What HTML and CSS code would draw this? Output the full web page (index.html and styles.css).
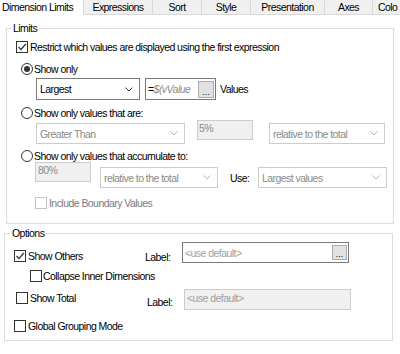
FILE: index.html
```html
<!DOCTYPE html>
<html>
<head>
<meta charset="utf-8">
<link rel="stylesheet" href="styles.css">
</head>
<body>
<div class="tabs">
  <div class="tab active">Dimension Limits</div>
  <div class="tab t-expr">Expressions</div>
  <div class="tab t-sort">Sort</div>
  <div class="tab t-style">Style</div>
  <div class="tab t-pres">Presentation</div>
  <div class="tab t-axes">Axes</div>
  <div class="tab t-colo">Colo</div>
</div>

<fieldset class="group limits">
  <legend>Limits</legend>

  <div class="row r1">
    <span class="cb checked"><svg width="10" height="10" viewBox="0 0 10 10"><polyline points="1.5,5 4,7.5 8.8,2" fill="none" stroke="#333" stroke-width="1.2"/></svg></span>
    <span class="txt">Restrict which values are displayed using the first expression</span>
  </div>

  <div class="row r2">
    <span class="radio on"><span class="dot"></span></span>
    <span class="txt">Show only</span>
  </div>

  <div class="row r3">
    <div class="select en sel-largest"><span class="val">Largest</span><svg class="chev" width="8" height="5" viewBox="0 0 8 5"><polyline points="0.5,0.5 4,4 7.5,0.5" fill="none" stroke="#444" stroke-width="1"/></svg></div>
    <div class="edit en expr"><span class="val"><span class="eq">=</span><span class="ital">$(vValue</span></span><span class="btn btn-expr">...</span></div>
    <span class="txt values">Values</span>
  </div>

  <div class="row r4">
    <span class="radio"></span>
    <span class="txt">Show only values that are:</span>
  </div>

  <div class="row r5">
    <div class="select dis sel-greater"><span class="val">Greater Than</span><svg class="chev" width="8" height="5" viewBox="0 0 8 5"><polyline points="0.5,0.5 4,4 7.5,0.5" fill="none" stroke="#b5b5b5" stroke-width="1"/></svg></div>
    <div class="edit dis pct5"><span class="val">5%</span></div>
    <div class="select dis sel-rel1"><span class="val">relative to the total</span><svg class="chev" width="8" height="5" viewBox="0 0 8 5"><polyline points="0.5,0.5 4,4 7.5,0.5" fill="none" stroke="#b5b5b5" stroke-width="1"/></svg></div>
  </div>

  <div class="row r6">
    <span class="radio"></span>
    <span class="txt">Show only values that accumulate to:</span>
  </div>

  <div class="row r7">
    <div class="edit dis pct80"><span class="val">80%</span></div>
    <div class="select dis sel-rel2"><span class="val">relative to the total</span><svg class="chev" width="8" height="5" viewBox="0 0 8 5"><polyline points="0.5,0.5 4,4 7.5,0.5" fill="none" stroke="#b5b5b5" stroke-width="1"/></svg></div>
    <span class="txt use">Use:</span>
    <div class="select dis sel-use"><span class="val">Largest values</span><svg class="chev" width="8" height="5" viewBox="0 0 8 5"><polyline points="0.5,0.5 4,4 7.5,0.5" fill="none" stroke="#b5b5b5" stroke-width="1"/></svg></div>
  </div>

  <div class="row r8">
    <span class="cb dis"></span>
    <span class="txt distxt">Include Boundary Values</span>
  </div>
</fieldset>

<fieldset class="group options">
  <legend>Options</legend>

  <div class="row o1">
    <div class="cbline o1-cb">
      <span class="cb checked"><svg width="10" height="10" viewBox="0 0 10 10"><polyline points="1.5,5 4,7.5 8.8,2" fill="none" stroke="#333" stroke-width="1.2"/></svg></span>
      <span class="txt cbtext">Show Others</span>
    </div>
    <span class="txt lbl o1-lbl">Label:</span>
    <div class="edit en labfield"><span class="val ph">&lt;use default&gt;</span><span class="btn btn-lab">...</span></div>
  </div>

  <div class="row o2">
    <span class="cb"></span>
    <span class="txt">Collapse Inner Dimensions</span>
  </div>

  <div class="row o3">
    <div class="cbline o3-cb">
      <span class="cb"></span>
      <span class="txt cbtext2">Show Total</span>
    </div>
    <span class="txt lbl o3-lbl">Label:</span>
    <div class="edit dis labfield2"><span class="val ph">&lt;use default&gt;</span></div>
  </div>

  <div class="row o4">
    <span class="cb"></span>
    <span class="txt">Global Grouping Mode</span>
  </div>
</fieldset>
</body>
</html>
```

FILE: styles.css
```css
html, body {
  margin: 0;
  padding: 0;
  background: #ffffff;
}
body {
  width: 400px;
  height: 354px;
  overflow: hidden;
  font-family: "Liberation Sans", Arial, sans-serif;
  font-size: 10.5px;
  letter-spacing: -0.55px;
  line-height: 12px;
  color: #000;
}

/* tabs */
.tabs {
  display: flex;
  height: 15px;
  width: 400px;
  overflow: hidden;
  white-space: nowrap;
}
.tab {
  flex: none;
  height: 14px;
  line-height: 14px;
  background: #f0f0f0;
  border-bottom: 1px solid #d9d9d9;
  border-left: 1px solid #d9d9d9;
  text-align: center;
  box-sizing: content-box;
}
.tab.active {
  width: 81px;
  background: #fff;
  border: none;
  height: 15px;
  text-align: left;
  padding-left: 2px;
}
.t-expr { width: 68px; }
.t-sort { width: 48px; }
.t-style { width: 48px; }
.t-pres { width: 73px; }
.t-axes { width: 47px; }
.t-colo { width: 22px; text-align: left; padding-left: 5px; overflow: hidden; }

/* group boxes */
.group {
  margin: 0;
  padding: 0;
  border: 1px solid #dcdcdc;
  box-sizing: border-box;
  min-width: 0;
}
.group legend {
  padding: 0 2px;
  line-height: 12px;
  height: 12px;
}
.limits {
  margin: 7px 0 0 6px;
  width: 388px;
  padding-bottom: 14px;
}
.limits legend { margin-left: 4px; }
.options {
  margin: 3px 0 0 4px;
  width: 389px;
  padding-bottom: 8px;
}
.options legend { margin-left: 5px; }

/* rows */
.row {
  display: flex;
  align-items: center;
  white-space: nowrap;
}
.txt { line-height: 12px; }

.r1 { margin-top: 6px; height: 14px; padding-left: 9px; }
.r1 .txt { margin-left: 2px; }
.r2 { margin-top: 8px; height: 13px; padding-left: 14px; }
.r2 .txt, .r4 .txt, .r6 .txt { margin-left: 1px; }
.r3 { margin-top: 3px; height: 22px; padding-left: 29px; }
.r4 { margin-top: 6px; height: 13px; padding-left: 14px; }
.r5 { margin-top: 1px; height: 24px; padding-left: 29px; align-items: flex-start; }
.r6 { margin-top: 5px; height: 13px; padding-left: 14px; }
.r7 { margin-top: 0; height: 26px; padding-left: 28px; align-items: flex-start; }
.r8 { margin-top: 9px; height: 12px; padding-left: 28px; }
.r8 .txt { margin-left: 2px; }

/* checkbox & radio */
.cb {
  flex: none;
  width: 12px;
  height: 12px;
  box-sizing: border-box;
  border: 1px solid #333;
  background: #fff;
  display: flex;
  align-items: center;
  justify-content: center;
}
.cb.dis { border-color: #c4c4c4; }
.radio {
  flex: none;
  width: 12px;
  height: 12px;
  box-sizing: border-box;
  border: 1px solid #333;
  border-radius: 50%;
  background: #fff;
  display: flex;
  align-items: center;
  justify-content: center;
}
.radio .dot {
  width: 6px;
  height: 6px;
  border-radius: 50%;
  background: #333;
}

/* selects & edits */
.select, .edit {
  flex: none;
  box-sizing: border-box;
  display: flex;
  align-items: center;
  overflow: hidden;
  background: #fff;
}
.select { padding-left: 3px; }
.select .val { flex: 1; overflow: hidden; }
.select .chev { flex: none; margin-right: 6px; }
.select.en { border: 1px solid #7a7a7a; }
.select.dis { border: 1px solid #cccccc; color: #8a8a8a; }
.edit.en { border: 1px solid #7a7a7a; }
.edit.dis { border: 1px solid #cccccc; background: #f0f0f0; color: #8a8a8a; }
.edit .val { flex: 1; overflow: hidden; white-space: nowrap; }

.sel-largest { width: 104px; height: 22px; }
.expr { width: 71px; height: 22px; margin-left: 5px; padding-left: 2px; }
.expr .eq { color: #000; }
.expr .ital { color: #8a8a8a; font-style: italic; }
.values { margin-left: 4px; }

.btn {
  flex: none;
  box-sizing: border-box;
  background: #e1e1e1;
  border: 1px solid #adadad;
  color: #000;
  font-size: 9px;
  letter-spacing: 0;
  line-height: 10px;
  text-align: center;
  display: flex;
  align-items: flex-end;
  justify-content: center;
}
.btn-expr { width: 16px; height: 17px; margin-right: 1px; }
.btn-lab { width: 15px; height: 15px; margin-right: 1px; }

.sel-greater { width: 149px; height: 21px; margin-top: 3px; }
.pct5 { width: 56px; height: 20px; margin-left: 12px; padding: 1px 0 0 1px; align-items: flex-start; }
.sel-rel1 { width: 116px; height: 21px; margin-left: 16px; margin-top: 3px; }

.pct80 { width: 56px; height: 20px; padding: 1px 0 0 2px; align-items: flex-start; }
.sel-rel2 { width: 118px; height: 21px; margin-left: 9px; margin-top: 5px; }
.use { width: 28px; margin-left: 12px; margin-top: 10px; }
.sel-use { width: 129px; height: 21px; margin-top: 5px; }

.distxt { color: #7a7a7a; }

/* options rows */
.o1 { margin-top: 3px; height: 21px; padding-left: 9px; align-items: flex-start; }
.cbline { display: flex; align-items: center; }
.o1-cb { margin-top: 8px; height: 12px; }
.cbtext { width: 117px; margin-left: 2px; }
.o1-lbl { width: 37px; margin-top: 9px; }
.labfield { width: 167px; height: 21px; padding-left: 2px; }
.ph { color: #a0a0a0; }

.o2 { margin-top: 7px; height: 12px; padding-left: 25px; }
.o2 .txt { margin-left: 1px; }

.o3 { margin-top: 7px; height: 21px; padding-left: 11px; align-items: flex-start; }
.o3-cb { margin-top: 3px; height: 12px; }
.cbtext2 { width: 117px; margin-left: 2px; }
.o3-lbl { width: 37px; margin-top: 7px; }
.labfield2 { width: 167px; height: 21px; padding: 2px 0 0 2px; align-items: flex-start; }

.o4 { margin-top: 10px; height: 12px; padding-left: 9px; }
.o4 .txt { margin-left: 2px; }
```
